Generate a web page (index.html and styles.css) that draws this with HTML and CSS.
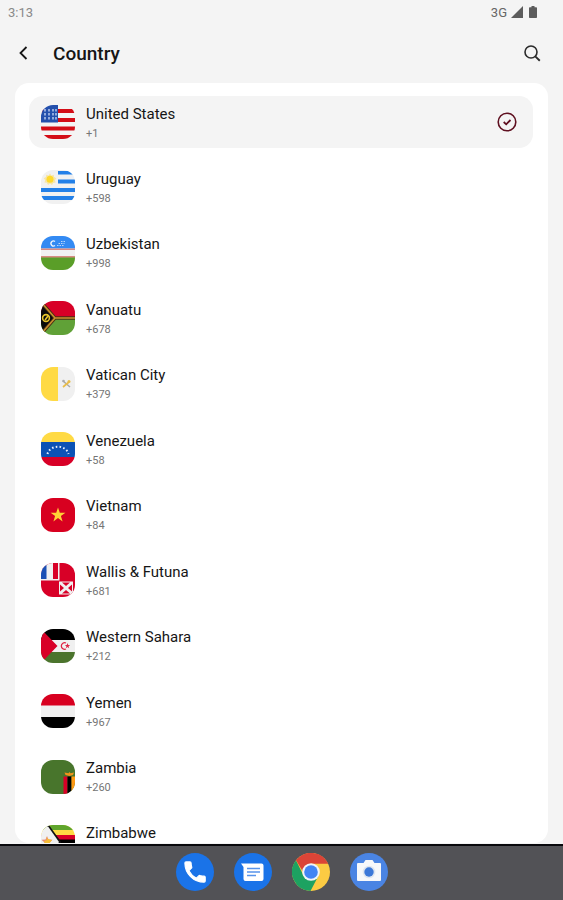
FILE: index.html
```html
<!DOCTYPE html>
<html lang="en">
<head>
<meta charset="utf-8">
<meta name="viewport" content="width=device-width, initial-scale=1">
<title>Country</title>
<link rel="stylesheet" href="styles.css">
</head>
<body>
<div class="status">
  <span>3:13</span>
  <div class="status-right">
    <span class="network">3G</span>
    <svg width="12" height="12" viewBox="0 0 12 12" aria-hidden="true"><path d="M12 0V12H0Z" fill="#5c5c5c"/></svg>
    <svg class="battery" width="8" height="12" viewBox="0 0 8 12" aria-hidden="true"><path d="M2.5 0h3v1.2H7.2q.8 0 .8.8v9.2q0 .8-.8.8H.8Q0 12 0 11.200V2q0-.8.8-.8H2.500Z" fill="#5c5c5c"/></svg>
  </div>
</div>
<header class="header">
  <button class="icon-button" type="button" aria-label="Back">
    <svg width="18" height="18" viewBox="0 0 18 18"><path d="M12.500 2L6.500 8l6 6" fill="none" stroke="#161616" stroke-width="1.8"/></svg>
  </button>
  <h1>Country</h1>
  <button class="icon-button" type="button" aria-label="Search">
    <svg width="18" height="18" viewBox="0 0 18 18"><circle cx="8" cy="7" r="6" fill="none" stroke="#2b2b2b" stroke-width="1.600"/><path d="M12.300 11.400L16.800 15.700" stroke="#2b2b2b" stroke-width="1.900"/></svg>
  </button>
</header>
<main class="card">
  <ul class="list">
    <li><button class="row selected" type="button">
      <svg class="flag" viewBox="0 0 34 34" aria-hidden="true"><path fill="#f4f4f4" d="M0 0h34v34H0z"/><path fill="#d40d17" d="M0 4h34v4H0zM0 13h34v4H0zM0 21.500h34v4H0zM0 30h34v4H0z"/><path fill="#2450ad" d="M0 0h17v17.500H0z"/><path stroke="#b9c9ec" stroke-width="1.500" stroke-dasharray="2.500 1.500" d="M4 4v12M8 4v12M12 4v12M15 4v12"/></svg>
      <span class="text"><span class="name">United States</span><span class="code">+1</span></span>
      <svg class="check" viewBox="0 0 20 20" aria-hidden="true"><circle cx="10" cy="10" r="8.800" fill="none" stroke="#5f1020" stroke-width="1.600"/><path d="M6.700 10l2.500 2.300 4.300-4.300" fill="none" stroke="#5f1020" stroke-width="1.800"/></svg>
    </button></li>
    <li><button class="row" type="button">
      <svg class="flag" viewBox="0 0 34 34" aria-hidden="true"><path fill="#f1f1f1" d="M0 0h34v34H0z"/><path fill="#2380e8" d="M17 1h17v3.500H17zM17 9.500h17v4H17zM0 18h34v4H0zM0 26h34v4H0z"/><path fill="#f8e6a4" d="M9 3.500l1.500 2 2.300-.8.300 2.400 2.300 1.200-1.500 1.900.8 2.300-2.500.4L11 15l-2-1.500L7 15l-1.200-2.200-2.400-.3.800-2.300-1.500-2 2.300-1.100.2-2.400 2.400.8z"/><circle cx="9" cy="9.300" r="3.500" fill="#ffda2c"/></svg>
      <span class="text"><span class="name">Uruguay</span><span class="code">+598</span></span>
    </button></li>
    <li><button class="row" type="button">
      <svg class="flag" viewBox="0 0 34 34" aria-hidden="true"><path fill="#f1f1f1" d="M0 0h34v34H0z"/><path fill="#338af3" d="M0 0h34v12.500H0z"/><path fill="#5a9e28" d="M0 21h34v13H0z"/><path fill="#d88b83" d="M0 12.500h34v1.500H0zM0 20h34v1.500H0z"/><path d="M14 5.500a2.500 2.500 0 1 0 0 4" fill="none" stroke="#e9f2fc" stroke-width="1.400"/><path d="M16 9.500h7M17.500 7.500h6M20 5.500h4" stroke="#b9d6fa" stroke-width="1" stroke-dasharray="1.500 1"/></svg>
      <span class="text"><span class="name">Uzbekistan</span><span class="code">+998</span></span>
    </button></li>
    <li><button class="row" type="button">
      <svg class="flag" viewBox="0 0 34 34" aria-hidden="true"><path fill="#d80027" d="M0 0h34v17H0z"/><path fill="#60a137" d="M0 17h34v17H0z"/><path d="M0 2l13 15L0 32z" fill="#0b0b0b"/><path d="M0 1l14 16L0 33M14 17h20" fill="none" stroke="#4a2c14" stroke-width="3.400"/><path d="M0 1l14 16L0 33M14 17h20" fill="none" stroke="#c7912e" stroke-width="1.600"/><circle cx="5" cy="17" r="3.400" fill="none" stroke="#e9c52c" stroke-width="1.600"/><path d="M4 19l3-4" stroke="#e9c52c" stroke-width="1.500"/></svg>
      <span class="text"><span class="name">Vanuatu</span><span class="code">+678</span></span>
    </button></li>
    <li><button class="row" type="button">
      <svg class="flag" viewBox="0 0 34 34" aria-hidden="true"><path fill="#f0f0f0" d="M0 0h34v34H0z"/><path fill="#ffda44" d="M0 0h17v34H0z"/><path d="M22 14l7 6" stroke="#a9a9a9" stroke-width="1.500"/><path d="M22 20l6-5" stroke="#e9bd49" stroke-width="1.700"/><circle cx="28" cy="14.500" r="1.500" fill="#e9bd49"/><circle cx="22.500" cy="14" r="1.300" fill="#a9a9a9"/></svg>
      <span class="text"><span class="name">Vatican City</span><span class="code">+379</span></span>
    </button></li>
    <li><button class="row" type="button">
      <svg class="flag" viewBox="0 0 34 34" aria-hidden="true"><path fill="#ffda44" d="M0 0h34v10H0z"/><path fill="#0b52b5" d="M0 10h34v15H0z"/><path fill="#d80027" d="M0 25h34v9H0z"/><path d="M6.500 22a10.700 9 0 0 1 21 0" fill="none" stroke="#e8effa" stroke-width="2" stroke-dasharray="1.600 2.200"/></svg>
      <span class="text"><span class="name">Venezuela</span><span class="code">+58</span></span>
    </button></li>
    <li><button class="row" type="button">
      <svg class="flag" viewBox="0 0 34 34" aria-hidden="true"><path fill="#d80020" d="M0 0h34v34H0z"/><path fill="#ffd236" d="M17 9.500l1.800 5.300h5.600l-4.500 3.300 1.700 5.300-4.600-3.300-4.600 3.300 1.700-5.300-4.500-3.300h5.600z"/></svg>
      <span class="text"><span class="name">Vietnam</span><span class="code">+84</span></span>
    </button></li>
    <li><button class="row" type="button">
      <svg class="flag" viewBox="0 0 34 34" aria-hidden="true"><path fill="#d80027" d="M0 0h34v34H0z"/><path fill="#f0f0f0" d="M0 0h18.500v17.500H0z"/><path fill="#1a50b5" d="M0 0h5.500v16H0z"/><path fill="#d80027" d="M12 0h5v16h-5z"/><path fill="#f0f0f0" d="M18 18.500h14v13H18z"/><path fill="#d80027" d="M21 19.500h8l-4 3.500zM21 30.500h8L25 27zM19 21.500v7l4-3.500zM31 21.500v7L27 25z"/></svg>
      <span class="text"><span class="name">Wallis &amp; Futuna</span><span class="code">+681</span></span>
    </button></li>
    <li><button class="row" type="button">
      <svg class="flag" viewBox="0 0 34 34" aria-hidden="true"><path fill="#f0f0f0" d="M0 0h34v34H0z"/><path d="M0 0h34v11H0z"/><path fill="#4b742d" d="M0 23h34v11H0z"/><path fill="#d80027" d="M0 0l16.500 17L0 34z"/><path d="M25 14a3.300 3.300 0 1 0 0 6" fill="none" stroke="#df2444" stroke-width="1.300"/><path fill="#df2444" d="M26.500 14l.7 2h2l-1.600 1.200.6 2-1.700-1.200-1.700 1.200.6-2-1.600-1.200h2z"/></svg>
      <span class="text"><span class="name">Western Sahara</span><span class="code">+212</span></span>
    </button></li>
    <li><button class="row" type="button">
      <svg class="flag" viewBox="0 0 34 34" aria-hidden="true"><path fill="#f0f0f0" d="M0 0h34v34H0z"/><path fill="#d80020" d="M0 0h34v11.500H0z"/><path d="M0 23h34v11H0z"/></svg>
      <span class="text"><span class="name">Yemen</span><span class="code">+967</span></span>
    </button></li>
    <li><button class="row" type="button">
      <svg class="flag" viewBox="0 0 34 34" aria-hidden="true"><path fill="#48752c" d="M0 0h34v34H0z"/><path fill="#d80027" d="M22.500 16.500h4V34h-4z"/><path d="M26.500 16.500h4V34h-4z"/><path fill="#ff9811" d="M30.500 16.500H34V34h-3.500z"/><path fill="#f0931a" d="M23.500 12.500l4 .8 1-1.300 1 1.300 3.500-.8-1 2.500-3.500 1-4-1z"/></svg>
      <span class="text"><span class="name">Zambia</span><span class="code">+260</span></span>
    </button></li>
    <li><button class="row" type="button">
      <svg class="flag" viewBox="0 0 34 34" aria-hidden="true"><path fill="#ffda44" d="M0 0h34v34H0z"/><path fill="#5fa52c" d="M0 0h34v5H0zM0 29h34v5H0z"/><path fill="#d80027" d="M0 10h34v5H0zM0 19h34v5H0z"/><path d="M0 14.500h34v5H0z"/><path d="M6-1l13 18L6 35" stroke="#111" stroke-width="2"/><path fill="#f0f0f0" d="M0 0h6l12 17L6 34H0z"/><path fill="#e88a78" d="M6 11l1.500 3.500 4 .3-3 2.700 1 4L6 19.500 2.500 21.500l1-4-3-2.700 4-.3z"/><path fill="#f5bd37" d="M5 12l2 2 4 1-3 4H4l-1-3 3-1z"/></svg>
      <span class="text"><span class="name">Zimbabwe</span></span>
    </button></li>
  </ul>
</main>
<nav class="dock" aria-label="Apps">
  <button class="app" type="button" aria-label="Phone">
    <svg viewBox="0 0 38 38"><circle cx="19" cy="19" r="19" fill="#1a73e8"/><path transform="translate(5.500 5.500) scale(1.130)" fill="#fff" stroke="#fff" stroke-width="1" stroke-linejoin="round" d="M6.600 10.800c1.400 2.800 3.800 5.100 6.600 6.600l2.200-2.200c.3-.3.700-.4 1-.2 1.100.4 2.300.6 3.600.6.600 0 1 .4 1 1V20c0 .6-.4 1-1 1C10.600 21 3 13.400 3 4c0-.6.500-1 1-1h3.500c.6 0 1 .4 1 1 0 1.200.2 2.500.6 3.600.1.300 0 .7-.3 1z"/></svg>
  </button>
  <button class="app" type="button" aria-label="Messages">
    <svg viewBox="0 0 38 38"><circle cx="19" cy="19" r="19" fill="#1a73e8"/><path fill="#fff" d="M7 10.500h20.500q2 0 2 2V26q0 2-2 2h-16q-2 0-2-2V14z"/><path d="M13 15.500h13M13 19h13M13 22.500h9" stroke="#5793ea" stroke-width="1.500"/></svg>
  </button>
  <button class="app" type="button" aria-label="Chrome">
    <svg viewBox="0 0 38 38"><circle cx="19" cy="19" r="19" fill="#fbcb43"/><path fill="#1da261" d="M4 7.300A19 19 0 0 0 18.500 38L26.200 23.200 11.800 23.200z"/><path fill="#db4437" d="M4 7.300A19 19 0 0 1 36.200 10.700H19L11.800 20z"/><circle cx="19" cy="19" r="8.800" fill="#f1f4f8"/><circle cx="19" cy="19" r="6.800" fill="#4285f4"/></svg>
  </button>
  <button class="app" type="button" aria-label="Camera">
    <svg viewBox="0 0 38 38"><circle cx="19" cy="19" r="19" fill="#4a84e3"/><path fill="#f7f8fa" d="M8 10h5.500l2-3h7l2 3H30q1 0 1 1v16q0 1-1 1H8q-1 0-1-1V11q0-1 1-1z"/><circle cx="19" cy="19" r="6.300" fill="#dfe6f0"/><circle cx="19" cy="19" r="4.700" fill="#3c78d8"/></svg>
  </button>
</nav>
</body>
</html>
```
FILE: styles.css
```css
* {
  box-sizing: border-box;
}

body {
  margin: 0;
  height: 100vh;
  display: flex;
  flex-direction: column;
  overflow: hidden;
  background: #f4f4f4;
  color: #161616;
  font-family: Roboto, "Liberation Sans", sans-serif;
}

button {
  border: 0;
  padding: 0;
  background: none;
  color: inherit;
  font: inherit;
  cursor: pointer;
}

svg {
  display: block;
}

.status {
  height: 24px;
  padding: 0 26px 0 8px;
  display: flex;
  align-items: center;
  justify-content: space-between;
  font-size: 13px;
  color: #8a8a8a;
}

.status-right {
  display: flex;
  align-items: center;
  gap: 4px;
}

.network {
  color: #666;
}

.battery {
  margin-left: 2px;
}

.header {
  height: 59px;
  padding: 0 22px 0 14px;
  display: flex;
  align-items: center;
}

.icon-button {
  display: flex;
}

h1 {
  flex: 1;
  margin: 0 0 0 21px;
  font-size: 19px;
  line-height: 24px;
  font-weight: 500;
}

.card {
  flex: 1;
  min-height: 0;
  margin: 0 15px 1px;
  padding: 13px 15px 0 14px;
  display: flex;
  flex-direction: column;
  overflow: hidden;
  border-radius: 14px;
  background: #fff;
}

/* The last row runs on under the dock. */
.list {
  flex: 1;
  margin: 0 0 -25px;
  padding: 0;
  display: flex;
  flex-direction: column;
  justify-content: space-between;
  list-style: none;
}

.row {
  width: 100%;
  height: 52px;
  padding: 0 16px 0 12px;
  display: flex;
  align-items: center;
  gap: 11px;
  border-radius: 14px;
  text-align: left;
}

.selected {
  background: #f4f4f4;
}

.flag {
  width: 34px;
  height: 34px;
  border-radius: 12px;
}

.text {
  flex: 1;
  min-height: 37px;
  display: flex;
  flex-direction: column;
  gap: 3px;
}

.name {
  font-size: 15px;
  line-height: 20px;
}

.code {
  font-size: 11px;
  line-height: 14px;
  color: #757575;
}

.check {
  width: 20px;
  height: 20px;
}

.dock {
  height: 56px;
  padding-bottom: 2px;
  display: flex;
  align-items: center;
  justify-content: center;
  gap: 20px;
  border-top: 2px solid #08080c;
  background: #525256;
}

.app {
  width: 38px;
  height: 38px;
}
```
